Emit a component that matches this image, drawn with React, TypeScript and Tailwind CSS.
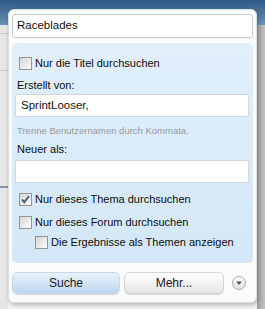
import React from 'react'

function Box({ checked = false }: { checked?: boolean }) {
  return (
    <div className="w-[13px] h-[13px] border border-[#959595] bg-gradient-to-br from-[#d6d6d6] to-[#fbfbfb] flex items-center justify-center shrink-0">
      {checked && (
        <svg width="11" height="11" viewBox="0 0 11 11">
          <path d="M2 5.5 L4.3 8.2 L9 2" fill="none" stroke="#3d5576" strokeWidth="1.8" />
        </svg>
      )}
    </div>
  )
}

function Check({ label, checked, indent }: { label: string; checked?: boolean; indent?: boolean }) {
  return (
    <div className={`flex items-center gap-[3px] h-[13px] ${indent ? 'pl-[20px]' : 'pl-[4px]'}`}>
      <Box checked={checked} />
      <span className="text-[11px] leading-[13px] text-[#0d0d0d]">{label}</span>
    </div>
  )
}

export default function App() {
  return (
    <div className="relative w-[265px] h-[309px] overflow-hidden bg-[#ececec] font-['Liberation_Sans',Arial,sans-serif]">
      {/* page behind the popup */}
      <div className="flex flex-col h-full">
        <div className="h-[25px] bg-gradient-to-b from-[#2d5883] to-[#6a91b7]" />
        <div className="flex flex-1">
          <div className="w-[8px] bg-[#e6e6e6] flex flex-col">
            <div className="h-[8px]" />
            <div className="h-px bg-[#c9c9c9]" />
            <div className="h-[36px]" />
            <div className="h-px bg-[#c9c9c9]" />
            <div className="h-[115px]" />
            <div className="h-[2px] bg-[#7d93ab]" />
          </div>
          <div className="flex-1 bg-[#f2f2f2]" />
          <div className="w-[8px] bg-gradient-to-r from-[#9f9f9f] to-[#c2c2c2]" />
        </div>
      </div>

      {/* search popup */}
      <div className="absolute left-[8px] top-[9px] w-[249px] h-[294px] rounded-[6px] bg-[#fafbfc] border border-[#dedede] shadow-[1px_2px_4px_rgba(0,0,0,0.25)] px-[3px] pt-[4px]">
        <div className="h-[24px] border border-[#c9c9c9] rounded-[3px] bg-white px-[4px] flex items-center text-[11.5px] text-[#111]">
          Raceblades
        </div>

        <div className="mt-[5px] h-[220px] rounded-[5px] bg-gradient-to-b from-[#e1effb] to-[#d3e7f8] px-[3px] pt-[14px]">
          <Check label="Nur die Titel durchsuchen" />
          <div className="mt-[7px] ml-[2px] h-[16px] leading-[16px] text-[11px] text-[#0d0d0d]">Erstellt von:</div>
          <div className="mt-[1px] mr-[1px] h-[23px] border border-[#cfd8e0] rounded-[2px] bg-white px-[5px] flex items-center text-[11.5px] text-[#111]">
            SprintLooser,
          </div>
          <div className="mt-[7px] ml-[2px] h-[14px] leading-[14px] text-[9.5px] text-[#9a9a9a]">Trenne Benutzernamen durch Kommata.</div>
          <div className="mt-[4px] ml-[2px] h-[14px] leading-[14px] text-[11px] text-[#0d0d0d]">Neuer als:</div>
          <div className="mt-[4px] mr-[1px] h-[23px] border border-[#cfd8e0] rounded-[2px] bg-white" />
          <div className="mt-[10px]"><Check label="Nur dieses Thema durchsuchen" checked /></div>
          <div className="mt-[10px]"><Check label="Nur dieses Forum durchsuchen" /></div>
          <div className="mt-[7px]"><Check label="Die Ergebnisse als Themen anzeigen" indent /></div>
        </div>

        <div className="mt-[9px] flex items-center">
          <button className="w-[108px] h-[22px] rounded-[6px] border border-[#c4d6e8] bg-gradient-to-b from-[#eaf3fb] to-[#bcd6ed] text-[12px] text-[#1a1a1a] shadow-[0_1px_1px_rgba(0,0,0,0.15)]">
            Suche
          </button>
          <button className="ml-[4px] w-[100px] h-[22px] rounded-[6px] border border-[#d4d4d4] bg-gradient-to-b from-[#ffffff] to-[#e6e6e6] text-[12px] text-[#1a1a1a] shadow-[0_1px_1px_rgba(0,0,0,0.15)]">
            Mehr...
          </button>
          <div className="ml-[8px] w-[14px] h-[14px] rounded-full border border-[#a9a9a9] bg-gradient-to-b from-[#ffffff] to-[#e2e2e2] flex items-center justify-center">
            <svg width="8" height="6" viewBox="0 0 8 6">
              <path d="M1 1.5 L7 1.5 L4 5 Z" fill="#555" />
            </svg>
          </div>
        </div>
      </div>
    </div>
  )
}
